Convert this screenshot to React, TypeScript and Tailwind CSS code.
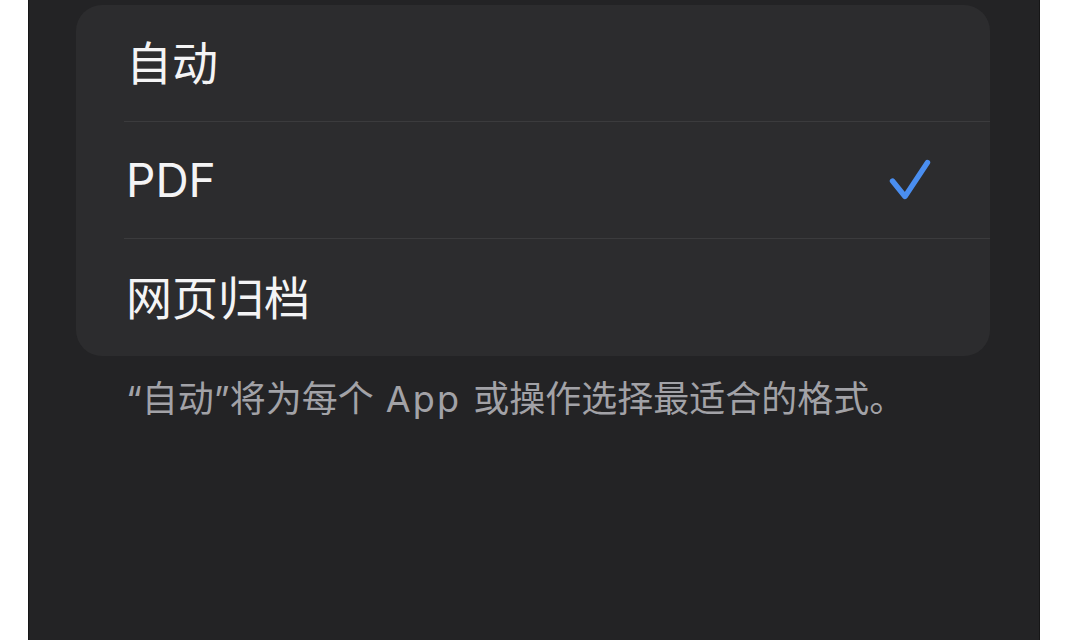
const options = [
  { id: 'auto', label: '自动', selected: false },
  { id: 'pdf', label: 'PDF', selected: true },
  { id: 'webarchive', label: '网页归档', selected: false }
];

const fontStack = 'font-["Inter","Noto_Sans_CJK_SC",sans-serif]';

const CheckMark = () => (
  <svg width="44" height="44" viewBox="0 0 44 44" fill="none" aria-hidden="true">
    <polyline
      points="4.5,23 17,38.5 39.5,4.5"
      stroke="#4a8ef0"
      strokeWidth="5.4"
      strokeLinecap="round"
      strokeLinejoin="round"
    />
  </svg>
);

export default function App() {
  return (
    <div className={`flex h-[640px] w-full overflow-hidden bg-white ${fontStack}`}>
      <div className="ml-[28px] w-[1012px] border-l border-r border-[#161617] bg-[#232325]">
        <div className="mt-[5px] ml-[47px] w-[914px] rounded-[26px] bg-[#2c2c2e]">
          {options.map((option, index) => (
            <div key={option.id} className="pl-[48px]">
              <div
                className={`flex h-[117px] items-center justify-between pr-[58px] ${
                  index < options.length - 1 ? 'border-b border-[#3b3b3d]' : ''
                }`}
              >
                <span className="pl-[2px] text-[46px] leading-none text-[#f4f4f5]">{option.label}</span>
                {option.selected && <CheckMark />}
              </div>
            </div>
          ))}
        </div>
        <p className="mt-[23px] pl-[97px] text-[36px] leading-[40px] text-[#a2a2a7]">
          “自动”将为每个<span className="mx-[12px] tracking-[0.06em]">App</span>或操作选择最适合的格式。
        </p>
      </div>
    </div>
  );
}
